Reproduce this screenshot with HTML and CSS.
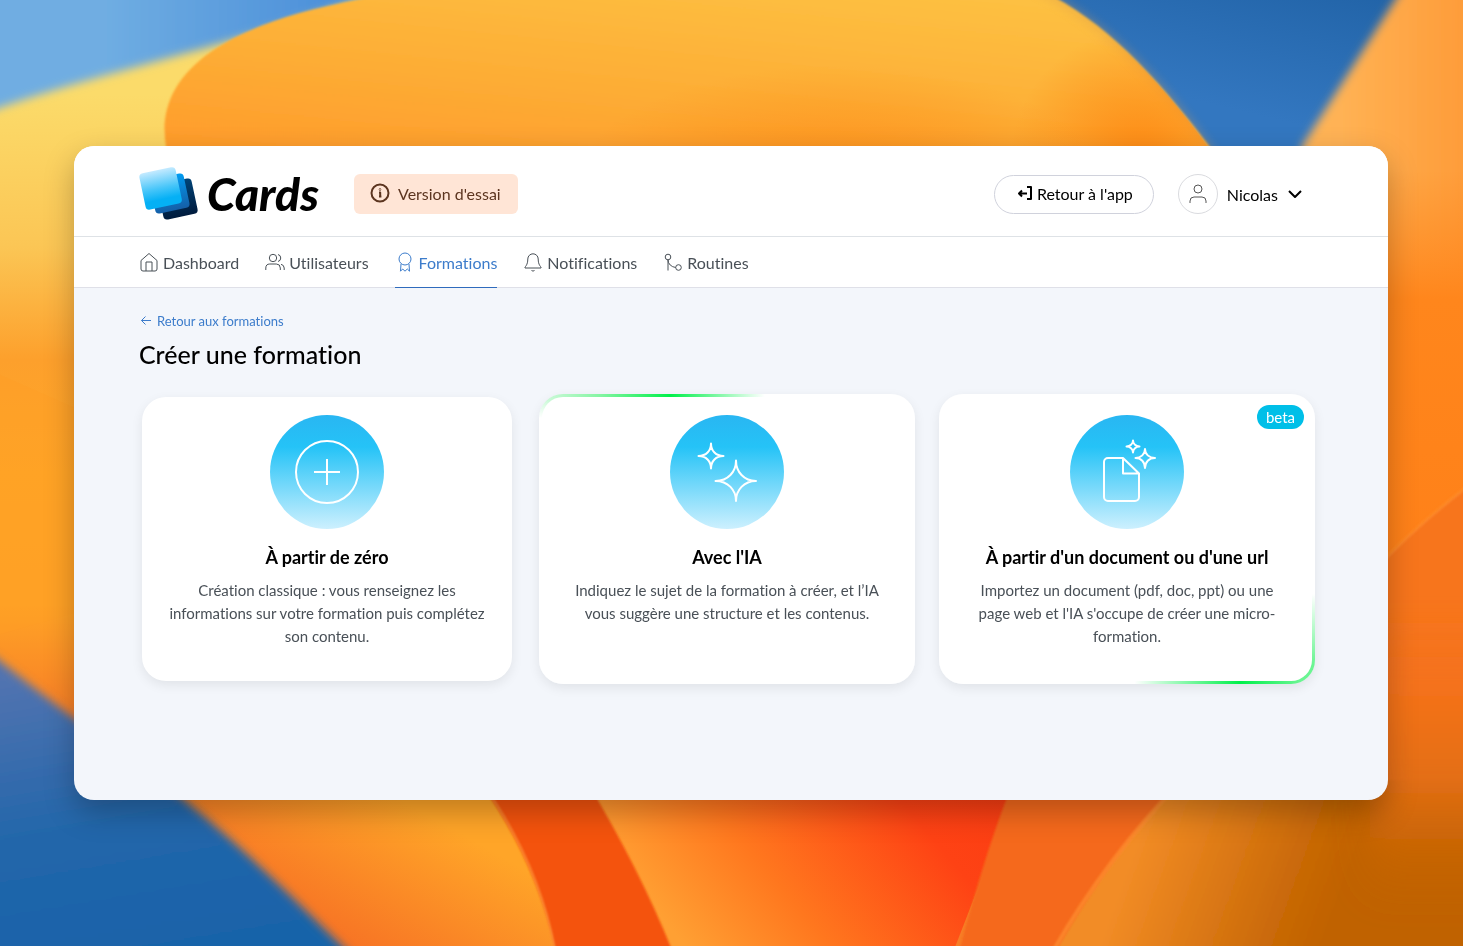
FILE: index.html
```
<!DOCTYPE html>
<html lang="fr">
<head>
    <meta charset="UTF-8">
    <meta name="viewport" content="width=device-width, initial-scale=1.0">
    <title>Cards - Créer une formation</title>
    <link rel="stylesheet" href="styles.css">
</head>
<body>
    <svg class="wallpaper" viewBox="0 0 1463 946" preserveAspectRatio="xMidYMid slice" aria-hidden="true">
        <defs>
            <linearGradient id="left" x1="0" y1="0" x2="0" y2="1"><stop offset=".1" stop-color="#fbdb6a"/><stop offset=".26" stop-color="#fbc655"/><stop offset=".38" stop-color="#fda02c"/><stop offset=".5" stop-color="#ffa726"/><stop offset=".64" stop-color="#ffa326"/><stop offset=".76" stop-color="#f77d26"/></linearGradient>
            <linearGradient id="sky" x1="0" y1="0" x2="1" y2="0"><stop offset=".3" stop-color="#6fade2"/><stop offset="1" stop-color="#3f85d6"/></linearGradient>
            <linearGradient id="blob" x1="0" y1="1" x2=".6" y2="0"><stop offset="0" stop-color="#ff9a2a"/><stop offset=".5" stop-color="#fdae36"/><stop offset="1" stop-color="#fdc042"/></linearGradient>
            <radialGradient id="glow"><stop offset="0" stop-color="#fe8a14"/><stop offset="1" stop-color="#fe8a14" stop-opacity="0"/></radialGradient>
            <linearGradient id="blue" x1=".2" y1="1" x2=".7" y2="0"><stop offset=".4" stop-color="#3377c0"/><stop offset="1" stop-color="#2163a7"/></linearGradient>
            <linearGradient id="peach" x1="0" y1="0" x2="1" y2="0"><stop offset=".1" stop-color="#ffb95e"/><stop offset=".5" stop-color="#ffb254"/><stop offset="1" stop-color="#fd9632"/></linearGradient>
            <linearGradient id="right" x1="0" y1="0" x2="0" y2="1"><stop offset="0" stop-color="#ff8b22" stop-opacity="0"/><stop offset=".3" stop-color="#ff861c"/><stop offset="1" stop-color="#ff8018"/></linearGradient>
            <linearGradient id="navy" x1=".1" y1="0" x2=".3" y2="1"><stop offset=".1" stop-color="#5173b0"/><stop offset=".6" stop-color="#2266aa"/><stop offset="1" stop-color="#1963a9"/></linearGradient>
            <linearGradient id="amber" x1=".25" y1=".8" x2=".85" y2=".4"><stop offset=".1" stop-color="#f66d24"/><stop offset="1" stop-color="#ffa528"/></linearGradient>
            <linearGradient id="fire" x1="0" y1=".45" x2="1" y2=".1"><stop offset=".05" stop-color="#ffa033"/><stop offset=".35" stop-color="#ff771e"/><stop offset=".75" stop-color="#fe4214"/><stop offset="1" stop-color="#fb3d12"/></linearGradient>
            <linearGradient id="bronze" gradientUnits="userSpaceOnUse" x1="1110" y1="850" x2="1330" y2="930"><stop offset=".1" stop-color="#f28c26"/><stop offset=".8" stop-color="#c86806"/><stop offset="1" stop-color="#c06200"/></linearGradient>
            <linearGradient id="side" gradientUnits="userSpaceOnUse" x1="0" y1="690" x2="0" y2="900"><stop offset="0" stop-color="#f5721a"/><stop offset=".45" stop-color="#e26e14"/><stop offset="1" stop-color="#c56404" stop-opacity="0"/></linearGradient>
            <filter id="soft" x="-10%" y="-10%" width="120%" height="120%"><feGaussianBlur stdDeviation="5"/></filter>
            <filter id="edge" x="-10%" y="-10%" width="120%" height="120%"><feGaussianBlur stdDeviation="1"/></filter>
            <filter id="haze" x="-50%" y="-50%" width="200%" height="200%"><feGaussianBlur stdDeviation="18"/></filter>
            <clipPath id="clip"><path d="M900 0H1055C1110 30 1160 80 1210 150H900Z"/></clipPath>
        </defs>
        <rect width="1463" height="946" fill="url(#left)"/>
        <path d="M-20 366L120 428V600L-20 640Z" fill="#ff9e26" opacity=".4"/>
        <path d="M-30 -30H420V-20L250 35C160 62 70 82 -30 118Z" fill="url(#sky)" filter="url(#soft)"/>
        <path d="M1000 -30H1440L1290 180H1220Z" fill="url(#blue)"/>
        <path d="M169 160C152 100 178 32 362 -1L420 -20H1000L1045 -8C1110 25 1160 80 1220 160Z" fill="url(#blob)" filter="url(#edge)"/>
        <path d="M1035 -12C1110 25 1160 80 1225 170" fill="none" stroke="#d89a4c" stroke-width="5" opacity=".5" filter="url(#soft)"/>
        <ellipse cx="1140" cy="160" rx="130" ry="130" fill="url(#glow)" clip-path="url(#clip)"/>
        <ellipse cx="840" cy="190" rx="270" ry="125" fill="url(#glow)" opacity=".8"/>
        <path d="M1408 -20H1500V980H1180L1302 146Z" fill="url(#peach)" filter="url(#soft)"/>
        <path d="M1380 170H1463V600H1380Z" fill="url(#right)"/>
        <path d="M1370 575Q1420 520 1490 470V960H1370Z" fill="#f7741a" filter="url(#edge)"/>
        <path d="M1370 575Q1420 520 1490 470" fill="none" stroke="#ff9638" stroke-width="3" opacity=".5" filter="url(#edge)"/>
        <path d="M100 780H480Q540 850 556 950H300Z" fill="url(#amber)"/>
        <path d="M-20 645C60 710 120 752 182 798C240 845 290 895 356 960H-20Z" fill="url(#navy)" filter="url(#soft)"/>
        <path d="M590 780H1020L950 960H650Z" fill="url(#fire)"/>
        <path d="M478 780H586Q640 870 672 950H555Q536 860 478 780Z" fill="#f4520e" filter="url(#edge)"/>
        <path d="M480 780Q538 860 555 950" fill="none" stroke="#ffa040" stroke-width="2" opacity=".7" filter="url(#edge)"/>
        <path d="M1014 780H1200L1060 960H957Q985 850 1014 780Z" fill="#f5691c" filter="url(#edge)"/>
        <path d="M1182 780H1500V980H1040Q1104 860 1182 780Z" fill="url(#bronze)" filter="url(#edge)"/>
        <path d="M1370 640H1540V980H1370Z" fill="url(#side)" filter="url(#haze)"/>
        <path d="M1182 780Q1104 860 1048 960" fill="none" stroke="#ff9132" stroke-width="4" opacity=".7" filter="url(#edge)"/>
    </svg>

    <div class="window">
        <header class="header">
            <a class="logo" href="#" aria-label="Cards">
                <svg width="60" height="54" viewBox="139 167 60 54" aria-hidden="true">
                    <defs>
                        <linearGradient id="l1" x1="0" y1="0" x2="0" y2="1"><stop offset="0" stop-color="#c4eaff"/><stop offset=".5" stop-color="#45c5f9"/><stop offset=".8" stop-color="#05b0f5"/></linearGradient>
                        <linearGradient id="l2" x1="0" y1="0" x2="0" y2="1"><stop offset="0" stop-color="#009cf2"/><stop offset="1" stop-color="#155fa8"/></linearGradient>
                        <linearGradient id="l3" x1="0" y1="0" x2="0" y2="1"><stop offset="0" stop-color="#004478"/><stop offset="1" stop-color="#001b3d"/></linearGradient>
                    </defs>
                    <rect x="160" y="181" width="35" height="36" rx="4" transform="rotate(-12 177.500 199)" fill="url(#l3)"/>
                    <rect x="152" y="176" width="35" height="35" rx="4" transform="rotate(-12 169.500 193.500)" fill="url(#l2)"/>
                    <rect x="142" y="170" width="37" height="37" rx="4" transform="rotate(-12 160 188)" fill="url(#l1)"/>
                </svg>
                <span class="logo-text">Cards</span>
            </a>
            <div class="trial">
                <svg width="20" height="20" viewBox="0 0 20 20" aria-hidden="true"><circle cx="10" cy="10" r="8.500"/><path d="M9 9.500h1.200v4M9 13.500h2.400"/><circle cx="10" cy="6.500" r=".3"/></svg>
                Version d'essai
            </div>
            <div class="account">
                <a class="back-app" href="#">
                    <svg width="16" height="16" viewBox="0 0 16 16" aria-hidden="true"><path d="M10 2h4v12h-4M10 8.500H2M5 5.500l-3 3 3 3"/></svg>
                    Retour à l'app
                </a>
                <button class="user" type="button">
                    <span class="avatar">
                        <svg width="20" height="20" viewBox="0 0 20 20" aria-hidden="true"><circle cx="10" cy="5" r="4"/><path d="M2 19v-2a4 4 0 0 1 4-4h8a4 4 0 0 1 4 4v2"/></svg>
                    </span>
                    Nicolas
                    <svg class="chevron" width="16" height="16" viewBox="0 0 16 16" aria-hidden="true"><path d="M2 5l6 6 6-6"/></svg>
                </button>
            </div>
        </header>

        <nav class="nav">
            <a href="#">
                <svg width="20" height="20" viewBox="0 0 20 20" aria-hidden="true"><path d="M2 8.500L10 1.500l8 7V17a2 2 0 0 1-2 2H4a2 2 0 0 1-2-2zM7 19v-9h6v9"/></svg>
                Dashboard
            </a>
            <a href="#">
                <svg width="20" height="20" viewBox="0 0 20 20" aria-hidden="true"><circle cx="8" cy="6" r="3.700"/><path d="M.8 18v-2a4 4 0 0 1 4-4h6.500a4 4 0 0 1 4 4v2M13 2.500a3.600 3.600 0 0 1 0 7M16 12.300a4 4 0 0 1 3.200 3.700v2"/></svg>
                Utilisateurs
            </a>
            <a href="#" class="active">
                <svg width="20" height="20" viewBox="0 0 20 20" aria-hidden="true"><circle cx="10" cy="7" r="6"/><path d="M6 12l-.5 7.200L7.700 17l2.300 2.200 2.300-2.200 2.200 2.200L14 12"/></svg>
                Formations
            </a>
            <a href="#">
                <svg width="20" height="20" viewBox="0 0 20 20" aria-hidden="true"><path d="M15.200 7a5.200 5.200 0 0 0-10.400 0c0 6-2.800 8-2.800 8v1h16v-1s-2.800-2-2.800-8M8.500 18.500q1.500 1.200 3 0"/></svg>
                Notifications
            </a>
            <a href="#">
                <svg width="20" height="20" viewBox="0 0 20 20" aria-hidden="true"><circle cx="5" cy="5" r="2.800"/><circle cx="15.500" cy="15.500" r="2.800"/><path d="M5 8v10.500M5 8a9 7.500 0 0 0 7.700 7.500"/></svg>
                Routines
            </a>
        </nav>

        <main class="content">
            <a class="back" href="#">
                <svg width="14" height="14" viewBox="0 0 14 14" aria-hidden="true"><path d="M12 6.500H2.500M6.500 2.500l-4 4 4 4"/></svg>
                Retour aux formations
            </a>
            <h1>Créer une formation</h1>

            <div class="cards">
                <a class="card card-plain" href="#">
                    <span class="card-icon">
                        <svg width="114" height="114" viewBox="0 0 114 114" aria-hidden="true"><circle cx="57" cy="57" r="31"/><path d="M57 44v26M44 57h26"/></svg>
                    </span>
                    <h2>À partir de zéro</h2>
                    <p>Création classique : vous renseignez les informations sur votre formation puis complétez son contenu.</p>
                </a>
                <a class="card card-ai" href="#">
                    <span class="card-icon">
                        <svg width="114" height="114" viewBox="0 0 114 114" aria-hidden="true"><path d="M41 28.500C41 36 46 41 53.500 41C46 41 41 46 41 53.500C41 46 36 41 28.500 41C36 41 41 36 41 28.500Z"/><path d="M66 45.500C66 57 74 66 86 66C74 66 66 75 66 86C66 75 58 66 45.500 66C58 66 66 57 66 45.500Z"/></svg>
                    </span>
                    <h2>Avec l'IA</h2>
                    <p>Indiquez le sujet de la formation à créer, et l’IA vous suggère une structure et les contenus.</p>
                </a>
                <a class="card card-doc" href="#">
                    <span class="badge">beta</span>
                    <span class="card-icon">
                        <svg width="114" height="114" viewBox="0 0 114 114" aria-hidden="true"><path d="M53 43H38a4 4 0 0 0-4 4v35a4 4 0 0 0 4 4h27a4 4 0 0 0 4-4V58.500zV58.500h16"/><path d="M63 25.500C63 29 66 31.500 69.500 31.500C66 31.500 63 34 63 37.500C63 34 60 31.500 56.500 31.500C60 31.500 63 29 63 25.500Z"/><path d="M75 34C75 39 79 43 85 43C79 43 75 47 75 53C75 47 71 43 65.500 43C71 43 75 39 75 34Z"/></svg>
                    </span>
                    <h2>À partir d'un document ou d'une url</h2>
                    <p>Importez un document (pdf, doc, ppt) ou une page web et l'IA s'occupe de créer une micro-formation.</p>
                </a>
            </div>
        </main>
    </div>
</body>
</html>
```

FILE: styles.css
```
* {
    box-sizing: border-box;
}

body {
    font-family: Lato, "Open Sans", sans-serif;
    font-size: 16px;
    font-variant-ligatures: none;
    color: #000;
    margin: 0;
    padding: 146px 75px 146px 74px;
    min-height: 100vh;
    display: flex;
    flex-direction: column;
    background-color: #ff9a2a;
}

a {
    color: inherit;
    text-decoration: none;
}

svg {
    fill: none;
    stroke: currentColor;
    stroke-linejoin: round;
    flex-shrink: 0;
}

.wallpaper {
    position: fixed;
    top: 0;
    left: 0;
    width: 100%;
    height: 100%;
    stroke: none;
    z-index: -1;
}

.window {
    flex: 1;
    display: flex;
    flex-direction: column;
    background-color: #f3f6fb;
    border-radius: 20px;
    overflow: hidden;
    box-shadow: 0 12px 30px rgba(0, 0, 0, 0.25);
}

/* Header */
.header {
    display: flex;
    align-items: center;
    padding: 21px 85px 15px 65px;
    background-color: #fff;
    border-bottom: 1px solid #dee2e6;
}

.logo {
    display: flex;
    align-items: center;
    gap: 8px;
}

    .logo svg {
        stroke: none;
    }

.logo-text {
    width: 112px;
    font-size: 46px;
    line-height: 48px;
    font-weight: 900;
    font-style: italic;
}

.trial {
    display: flex;
    align-items: center;
    gap: 8px;
    height: 40px;
    margin-left: 35px;
    padding: 0 17px 2px 16px;
    border-radius: 6px;
    background-color: #ffe5d6;
    color: #5c3520;
}

    .trial svg {
        stroke-width: 2;
    }

.account {
    display: flex;
    align-items: center;
    gap: 24px;
    margin-left: auto;
}

.back-app {
    display: flex;
    align-items: center;
    gap: 4px;
    height: 39px;
    padding: 0 20px 2px 22px;
    border: 1px solid #d0d2dc;
    border-radius: 20px;
}

    .back-app svg {
        stroke-width: 2;
    }

.user {
    display: flex;
    align-items: center;
    gap: 9px;
    padding: 0;
    border: 0;
    background: none;
    font: inherit;
    color: inherit;
    cursor: pointer;
}

.avatar {
    display: flex;
    align-items: center;
    justify-content: center;
    width: 40px;
    height: 40px;
    border: 1px solid #dadbdf;
    border-radius: 50%;
    color: #555;
}

.chevron {
    stroke-width: 2;
}

/* Navigation */
.nav {
    display: flex;
    gap: 26px;
    padding: 0 65px;
    background-color: #fff;
    border-bottom: 1px solid #dfe0e8;
    color: #495057;
}

    .nav a {
        display: flex;
        align-items: center;
        gap: 4px;
        height: 51px;
        margin-bottom: -1px;
        border-bottom: 1px solid transparent;
    }

    .nav .active {
        color: #3c7ccb;
        border-bottom-color: #2f6bbd;
    }

/* Content */
.content {
    padding: 23px 73px 40px 65px;
}

.back {
    display: inline-flex;
    align-items: center;
    gap: 4px;
    font-size: 13px;
    line-height: 20px;
    color: #3c7ccb;
}

h1 {
    margin: 7px 0 24px;
    font-size: 25px;
    line-height: 32px;
    font-weight: 500;
}

.cards {
    display: grid;
    grid-template-columns: repeat(3, 1fr);
    gap: 24px;
}

.card {
    position: relative;
    display: flex;
    flex-direction: column;
    align-items: center;
    padding: 18px 21px 33px;
    border: 3px solid transparent;
    border-radius: 24px;
    text-align: center;
    box-shadow: 0 4px 12px rgba(0, 0, 0, 0.08);
}

.card-plain {
    margin: 3px;
    border: 0;
    background-color: #fff;
}

.card-ai {
    background:
        linear-gradient(#fff, #fff) padding-box,
        linear-gradient(180deg, transparent 6px, #fff 24px) border-box,
        linear-gradient(90deg, #d6fae0 0, #86f5a4 16%, #00f04a 35%, #fff 60%) border-box;
}

.card-doc {
    background:
        linear-gradient(#fff, #fff) padding-box,
        linear-gradient(0deg, transparent 20px, #fff 90px) border-box,
        linear-gradient(90deg, #fff 52%, #00f04a 80%, #6af592 96%) border-box;
}

.card-icon {
    width: 114px;
    height: 114px;
    border-radius: 50%;
    background: linear-gradient(180deg, #29b6f2 0%, #25c3f7 28%, #cdf0fe 100%);
    color: #fff;
}

    .card-icon svg {
        display: block;
        stroke-width: 2;
    }

.card h2 {
    margin: 16px 0 10px;
    font-size: 18px;
    line-height: 24px;
    font-weight: 700;
}

.card p {
    margin: 0;
    font-size: 15px;
    line-height: 23px;
    color: #495057;
}

.badge {
    position: absolute;
    top: 8px;
    right: 8px;
    padding: 0 9px;
    border-radius: 12px;
    background-color: #00bfe8;
    color: #fff;
    font-size: 15px;
    line-height: 24px;
}
```
